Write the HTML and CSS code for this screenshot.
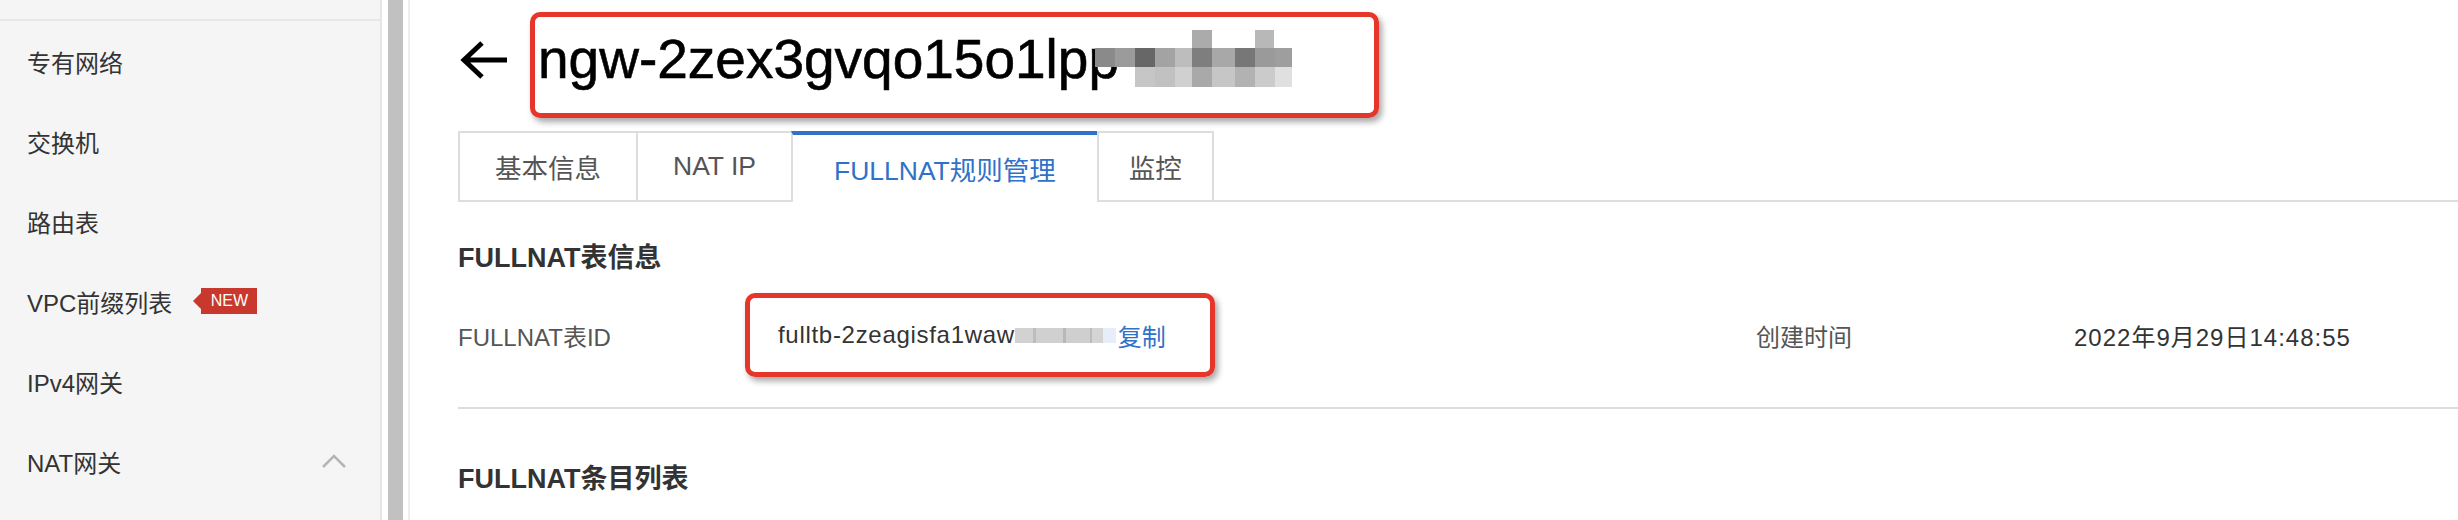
FILE: index.html
```html
<!DOCTYPE html>
<html lang="zh-CN">
<head>
<meta charset="utf-8">
<title>NAT网关详情</title>
<link rel="stylesheet" href="styles.css">
</head>
<body>
<div class="app">
  <aside class="sidebar">
    <div class="sb-top"></div>
    <ul class="nav">
      <li class="nav-item">专有网络</li>
      <li class="nav-item">交换机</li>
      <li class="nav-item">路由表</li>
      <li class="nav-item">VPC前缀列表<span class="badge"><span class="badge-tip"></span><span class="badge-body">NEW</span></span></li>
      <li class="nav-item">IPv4网关</li>
      <li class="nav-item">NAT网关<svg class="chev" width="26" height="16" viewBox="0 0 26 16"><polyline points="2,14 13,3 24,14" fill="none" stroke="#b5b5b5" stroke-width="2.5"/></svg></li>
    </ul>
  </aside>
  <div class="gutter"><div class="thumb"></div></div>
  <main class="main">
    <div class="title-row">
      <svg class="back" width="50" height="40" viewBox="0 0 50 40"><path d="M49 20 H7 M24 3 L6 20 L24 37" fill="none" stroke="#000" stroke-width="5"/></svg>
      <div class="title-box">
        <span class="title-text">ngw-2zex3gvqo15o1lpp</span><svg class="mosaic" width="197" height="57" viewBox="0 0 197 57">
          <rect x="97" y="0" width="20" height="18" fill="#ababab"/>
          <rect x="160" y="0" width="19" height="18" fill="#b8b8b8"/>
          <rect x="0" y="18" width="20" height="19" fill="#8a8a8a"/>
          <rect x="20" y="18" width="20" height="19" fill="#9b9b9b"/>
          <rect x="40" y="18" width="20" height="19" fill="#676767"/>
          <rect x="60" y="18" width="20" height="19" fill="#a3a3a3"/>
          <rect x="80" y="18" width="17" height="19" fill="#bdbdbd"/>
          <rect x="97" y="18" width="20" height="19" fill="#7e7e7e"/>
          <rect x="117" y="18" width="23" height="19" fill="#a8a8a8"/>
          <rect x="140" y="18" width="20" height="19" fill="#777777"/>
          <rect x="160" y="18" width="20" height="19" fill="#9a9a9a"/>
          <rect x="180" y="18" width="17" height="19" fill="#9e9e9e"/>
          <rect x="40" y="37" width="20" height="20" fill="#c6c6c6"/>
          <rect x="60" y="37" width="20" height="20" fill="#c1c1c1"/>
          <rect x="80" y="37" width="17" height="20" fill="#d0d0d0"/>
          <rect x="97" y="37" width="20" height="20" fill="#a9a9a9"/>
          <rect x="117" y="37" width="23" height="20" fill="#c6c6c6"/>
          <rect x="140" y="37" width="20" height="20" fill="#b2b2b2"/>
          <rect x="160" y="37" width="20" height="20" fill="#cbcbcb"/>
          <rect x="180" y="37" width="17" height="20" fill="#e0e0e0"/>
        </svg>
      </div>
    </div>

    <nav class="tabs">
      <div class="tab">基本信息</div>
      <div class="tab">NAT IP</div>
      <div class="tab active">FULLNAT规则管理</div>
      <div class="tab last">监控</div>
    </nav>

    <h2 class="sec-title">FULLNAT表信息</h2>
    <div class="info-grid">
      <div class="label">FULLNAT表ID</div>
      <div class="value">
        <div class="id-box">
          <span class="id-text">fulltb-2zeagisfa1waw</span><span class="id-blur"></span><span class="id-sliver"></span><a class="copy">复制</a>
        </div>
      </div>
      <div class="label">创建时间</div>
      <div class="value date">2022年9月29日14:48:55</div>
    </div>

    <div class="divider"></div>
    <h2 class="sec-title sec2">FULLNAT条目列表</h2>
  </main>
</div>
</body>
</html>
```
FILE: styles.css
```css
* { box-sizing: border-box; }
html, body { margin: 0; padding: 0; }
body {
  width: 2458px;
  height: 520px;
  overflow: hidden;
  background: #fff;
  font-family: "Liberation Sans", "Noto Sans CJK SC", sans-serif;
  color: #333;
}
.app {
  display: flex;
  height: 520px;
}

/* Sidebar */
.sidebar {
  width: 382px;
  flex: none;
  background: #f5f5f5;
  border-right: 2px solid #e6e6e6;
}
.sb-top {
  height: 21px;
  border-bottom: 2px solid #e8e8e8;
}
.nav {
  list-style: none;
  margin: 0;
  padding: 0;
}
.nav-item {
  height: 80px;
  display: flex;
  align-items: center;
  padding-left: 27px;
  font-size: 24px;
  color: #333;
}
.badge {
  display: flex;
  align-items: center;
  margin-left: 21px;
}
.badge-tip {
  width: 0;
  height: 0;
  border-top: 8px solid transparent;
  border-bottom: 8px solid transparent;
  border-right: 8px solid #c9382d;
}
.badge-body {
  background: #c9382d;
  color: #fff;
  font-size: 16px;
  height: 26px;
  line-height: 26px;
  width: 56px;
  text-align: center;
}
.chev {
  margin-left: auto;
  margin-right: 33px;
}

/* Gutter with scrollbar */
.gutter {
  width: 26px;
  flex: none;
  padding-left: 6px;
  background: #fff;
}
.thumb {
  width: 15px;
  height: 100%;
  background: #c1c1c1;
}

/* Main */
.main {
  flex: 1;
  border-left: 2px solid #ededed;
  padding-left: 48px;
  min-width: 0;
}
.title-row {
  display: flex;
  align-items: flex-start;
  margin-top: 12px;
}
.back {
  margin-top: 28px;
  flex: none;
}
.title-box {
  margin-left: 22px;
  width: 849px;
  height: 106px;
  border: 5px solid #e6362b;
  border-radius: 10px;
  box-shadow: 3px 4px 6px rgba(0, 0, 0, 0.35);
  padding: 0 0 12px 3px;
  white-space: nowrap;
  overflow: hidden;
}
.title-text {
  font-size: 55px;
  line-height: 84px;
  color: #000;
  -webkit-text-stroke: 0.6px #000;
}
.mosaic {
  vertical-align: -9px;
  margin-left: -24px;
}

/* Tabs */
.tabs {
  display: flex;
  margin-top: 13px;
  border-bottom: 2px solid #dddddd;
  height: 71px;
}
.tab {
  height: 69px;
  display: flex;
  align-items: center;
  padding: 0 35px;
  font-size: 26.5px;
  color: #555;
  border-top: 2px solid #dddddd;
  border-left: 2px solid #dddddd;
  background: #fff;
}
.tab.last {
  border-right: 2px solid #dddddd;
  padding: 0 30px;
}
.tab.active {
  height: 71px;
  border-top: 4px solid #2f72c8;
  color: #2f72c8;
  padding: 0 41px;
}

/* Info */
.sec-title {
  margin: 36px 0 0 0;
  font-size: 27px;
  line-height: 40px;
  font-weight: bold;
  color: #333;
}
.info-grid {
  display: grid;
  grid-template-columns: 287px 1011px 318px 1fr;
  align-items: center;
  margin-top: 15px;
  font-size: 24px;
}
.label {
  color: #555;
}
.value {
  color: #333;
}
.id-box {
  width: 470px;
  height: 84px;
  border: 5px solid #e6362b;
  border-radius: 10px;
  box-shadow: 3px 4px 6px rgba(0, 0, 0, 0.35);
  padding-left: 28px;
  display: flex;
  align-items: center;
  white-space: nowrap;
}
.id-text {
  letter-spacing: 0.7px;
}
.id-blur {
  width: 88px;
  height: 15px;
  background: linear-gradient(90deg, #d2d2d2 0 20%, #bdbdbd 20% 24%, #d0d0d0 24% 55%, #b8b8b8 55% 58%, #cfcfcf 58% 85%, #bcbcbc 85% 88%, #d4d4d4 88%);
}
.id-sliver {
  width: 13px;
  height: 15px;
  background: #e7eefa;
}
.copy {
  margin-left: 2px;
  color: #2f72c8;
}
.date {
  letter-spacing: 1px;
}

.divider {
  margin-top: 30px;
  border-top: 2px solid #dddddd;
}
.sec2 {
  margin-top: 50px;
}
```
